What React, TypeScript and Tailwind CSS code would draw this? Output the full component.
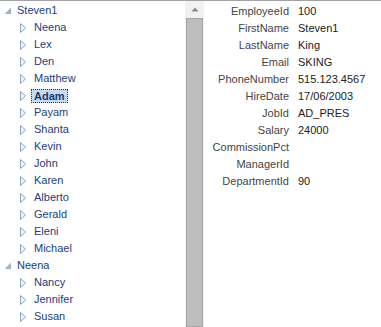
import React from "react";

const font = { fontFamily: '"Liberation Sans", Arial, sans-serif' };

type Node = { name: string; children?: string[] };

const tree: Node[] = [
  {
    name: "Steven1",
    children: [
      "Neena",
      "Lex",
      "Den",
      "Matthew",
      "Adam",
      "Payam",
      "Shanta",
      "Kevin",
      "John",
      "Karen",
      "Alberto",
      "Gerald",
      "Eleni",
      "Michael",
    ],
  },
  { name: "Neena", children: ["Nancy", "Jennifer", "Susan"] },
];

const fields: [string, string][] = [
  ["EmployeeId", "100"],
  ["FirstName", "Steven1"],
  ["LastName", "King"],
  ["Email", "SKING"],
  ["PhoneNumber", "515.123.4567"],
  ["HireDate", "17/06/2003"],
  ["JobId", "AD_PRES"],
  ["Salary", "24000"],
  ["CommissionPct", ""],
  ["ManagerId", ""],
  ["DepartmentId", "90"],
];

function Expanded() {
  return (
    <svg width="8" height="8" viewBox="0 0 8 8" className="shrink-0">
      <polygon points="7,0.5 7,7 0.5,7" fill="#a3b3c6" />
    </svg>
  );
}

function Collapsed() {
  return (
    <svg width="7" height="10" viewBox="0 0 7 10" className="shrink-0">
      <polygon points="0.5,0.5 5.5,5 0.5,9.5" fill="#f2f6fb" stroke="#8aa5c4" strokeWidth="1" />
    </svg>
  );
}

export default function App() {
  return (
    <div
      className="w-[381px] h-[327px] overflow-hidden bg-white border-t border-[#a3a3a3] flex text-[11px]"
      style={font}
    >
      <div className="w-[185px] pt-[1px] flex flex-col">
        {tree.map((n, i) => (
          <React.Fragment key={i}>
            <div className="h-[17px] flex items-center pl-[4px] gap-[5px] text-[#23407a]">
              <Expanded />
              <span className="leading-[17px]">{n.name}</span>
            </div>
            {n.children?.map((c) => (
              <div
                key={c}
                className="h-[17px] flex items-center pl-[20px] gap-[7px] text-[#23407a]"
              >
                <Collapsed />
                {c === "Adam" ? (
                  <span className="font-bold leading-[12px] px-[2px] py-[0px] ml-[-3px] bg-[#c8dbf2] border border-dotted border-[#1b3769] text-[#1b3769]">
                    {c}
                  </span>
                ) : (
                  <span className="leading-[17px]">{c}</span>
                )}
              </div>
            ))}
          </React.Fragment>
        ))}
      </div>
      <div className="w-[19px] bg-[#f1f1f1] flex flex-col">
        <div className="h-[17px] flex items-center justify-center shrink-0">
          <svg width="8" height="5" viewBox="0 0 8 5">
            <polygon points="4,0.5 7.5,4.5 0.5,4.5" fill="#8a8a8a" />
          </svg>
        </div>
        <div className="flex-1 mx-[1px] bg-[#bdbdbd] border border-[#a6a6a6]" />
      </div>
      <div className="flex-1 pt-[2px] pl-[1px]">
        {fields.map(([k, v]) => (
          <div key={k} className="h-[17px] flex items-center">
            <span className="w-[84px] text-right text-[#454545] leading-[17px]">{k}</span>
            <span className="ml-[9px] text-[#222222] leading-[17px]">{v}</span>
          </div>
        ))}
      </div>
    </div>
  );
}
